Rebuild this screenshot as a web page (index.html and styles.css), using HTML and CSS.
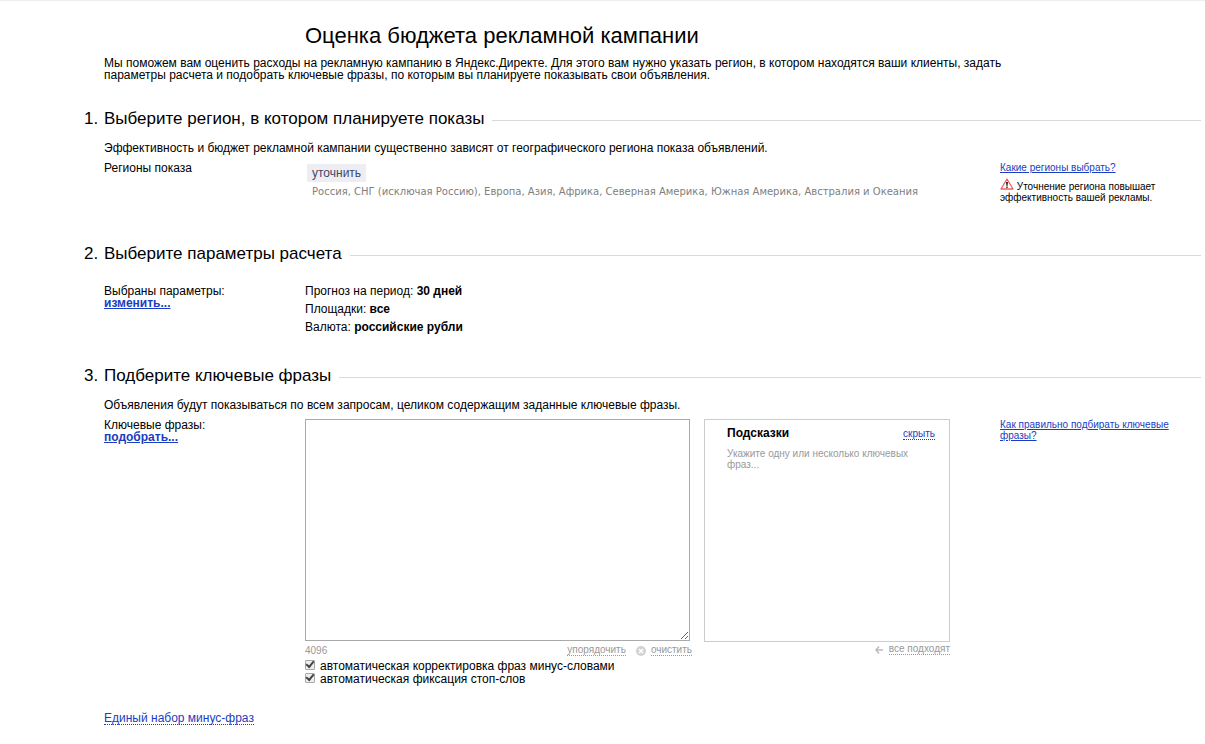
FILE: index.html
```html
<!DOCTYPE html>
<html lang="ru">
<head>
<meta charset="utf-8">
<meta name="viewport" content="width=device-width, initial-scale=1">
<title>Оценка бюджета рекламной кампании</title>
<link rel="stylesheet" href="styles.css">
</head>
<body>
<main class="page">
  <header class="intro">
    <h1 class="title">Оценка бюджета рекламной кампании</h1>
    <p class="lead">Мы поможем вам оценить расходы на рекламную кампанию в Яндекс.Директе. Для этого вам нужно указать регион, в котором находятся ваши клиенты, задать параметры расчета и подобрать ключевые фразы, по которым вы планируете показывать свои объявления.</p>
  </header>

  <section class="step step-region">
    <h2 class="step-title"><span class="num">1.</span><span>Выберите регион, в котором планируете показы</span></h2>
    <p class="note">Эффективность и бюджет рекламной кампании существенно зависят от географического региона показа объявлений.</p>
    <div class="row">
      <div>Регионы показа</div>
      <div class="regions">
        <button type="button" class="refine">уточнить</button>
        <p class="region-list">Россия, СНГ (исключая Россию), Европа, Азия, Африка, Северная Америка, Южная Америка, Австралия и Океания</p>
      </div>
      <aside class="help">
        <a href="#">Какие регионы выбрать?</a>
        <p class="warning"><svg class="warn-icon" viewBox="0 0 14 12" aria-hidden="true"><path d="M7 1 13 11H1Z" fill="#fff" stroke="#f0605c" stroke-width="1.3" stroke-linejoin="round"/><path d="M6 4h2L7.500 8h-1ZM6.300 8.600h1.400v1.400H6.300Z" fill="#222"/></svg> Уточнение региона повышает эффективность вашей рекламы.</p>
      </aside>
    </div>
  </section>

  <section class="step step-params">
    <h2 class="step-title"><span class="num">2.</span><span>Выберите параметры расчета</span></h2>
    <div class="row">
      <div>Выбраны параметры:<br><a class="strong-link" href="#">изменить...</a></div>
      <ul class="params">
        <li>Прогноз на период: <b>30 дней</b></li>
        <li>Площадки: <b>все</b></li>
        <li>Валюта: <b>российские рубли</b></li>
      </ul>
    </div>
  </section>

  <section class="step step-phrases">
    <h2 class="step-title"><span class="num">3.</span><span>Подберите ключевые фразы</span></h2>
    <p class="note">Объявления будут показываться по всем запросам, целиком содержащим заданные ключевые фразы.</p>
    <div class="row">
      <div><label for="phrases">Ключевые фразы:</label><br><a class="strong-link" href="#">подобрать...</a></div>
      <div class="editor">
        <div class="phrases">
          <textarea id="phrases" class="phrase-box"></textarea>
          <div class="tools">
            <span class="count">4096</span>
            <button type="button" class="pseudo">упорядочить</button>
            <svg class="clear-icon" viewBox="0 0 10 10" aria-hidden="true"><circle cx="5" cy="5" r="5" fill="#d2d2d2"/><path d="M3 3 7 7M7 3 3 7" stroke="#fff" stroke-width="1.6"/></svg>
            <button type="button" class="pseudo">очистить</button>
          </div>
          <label class="check"><input type="checkbox" checked><span>автоматическая корректировка фраз минус-словами</span></label>
          <label class="check"><input type="checkbox" checked><span>автоматическая фиксация стоп-слов</span></label>
        </div>
        <div class="hints">
          <div class="hint-box">
            <div class="hint-head"><h3>Подсказки</h3><button type="button" class="pseudo hide">скрыть</button></div>
            <p class="hint-text">Укажите одну или несколько ключевых фраз...</p>
          </div>
          <div class="hint-tools">
            <svg class="arrow-icon" viewBox="0 0 8 8" aria-hidden="true"><path d="M4 .5.900 4 4 7.500M1 4h7" fill="none" stroke="#bbb" stroke-width="1.5"/></svg>
            <button type="button" class="pseudo">все подходят</button>
          </div>
        </div>
      </div>
      <aside class="help"><a href="#">Как правильно подбирать ключевые фразы?</a></aside>
    </div>
    <button type="button" class="pseudo minus">Единый набор минус-фраз</button>
  </section>
</main>
</body>
</html>
```
FILE: styles.css
```css
* { box-sizing: border-box; }
body {
  margin: 0;
  border-top: 1px solid #eee;
  background: #fff;
  color: #000;
  font: 12px/12px "Liberation Sans", Arial, sans-serif;
}
h1, h2, h3, p, ul { margin: 0; padding: 0; font-weight: normal; }
a { color: #1a3dc1; text-decoration: underline; }
button {
  padding: 0;
  border: 0;
  background: none;
  color: inherit;
  font: inherit;
  cursor: pointer;
}
.page { padding: 20px 4px 16px 104px; }
.title { padding-left: 201px; font-size: 22px; line-height: 30px; }
.lead { max-width: 920px; margin-top: 6px; }

.step-title {
  display: flex;
  align-items: center;
  margin-left: -20px;
  font-size: 17px;
  line-height: 20px;
}
.step-title .num { width: 20px; flex: none; }
.step-title::after {
  content: "";
  flex: 1;
  height: 1px;
  margin: 2px 0 0 8px;
  background: #d9d9d9;
}
.step-region { margin-top: 28px; }
.step-params { margin-top: 41px; }
.step-phrases { margin-top: 27px; }
.note { margin-top: 13px; }
.row {
  display: grid;
  grid-template-columns: 201px minmax(0, 1fr) 201px;
  margin-top: 8px;
}
.step-params .row { margin-top: 21px; }

.regions { padding-left: 2px; }
.refine {
  display: block;
  height: 18px;
  margin-top: 2px;
  padding: 0 5px;
  border-radius: 1px;
  background: #eeeef2;
  color: #3f4668;
}
.region-list {
  padding: 4px 0 0 5px;
  color: #808080;
  font: 10px/12px "DejaVu Sans", Verdana, sans-serif;
}
.help { font-size: 10px; line-height: 11px; }
.warning { max-width: 170px; margin-top: 5px; }
.warn-icon { width: 14px; height: 12px; }
.strong-link { font-weight: bold; }
.params { list-style: none; }
.params li { margin-bottom: 6px; }

.editor {
  display: grid;
  grid-template-columns: minmax(0, 385fr) minmax(0, 246fr);
  gap: 14px;
  margin-right: 50px;
}
.phrase-box {
  display: block;
  width: 100%;
  height: 222px;
  border: 1px solid #a9a9a9;
  background: #fff;
  resize: vertical;
}
.tools, .hint-tools {
  display: flex;
  align-items: center;
  color: #999;
  font-size: 10px;
  line-height: 10px;
}
.tools { margin: 4px -2px 3px 0; }
.count { flex: 1; }
.pseudo { border-bottom: 1px dotted currentColor; }
.clear-icon { width: 10px; height: 10px; margin: 0 5px 0 10px; }
.check { display: flex; align-items: center; height: 13px; }
.check input {
  appearance: none;
  width: 10px;
  height: 10px;
  margin: 0 5px 2px 0;
  border: 1px solid #aaa;
  border-radius: 1px;
  background: #eee;
  display: grid;
  place-items: center;
}
.check input:checked::before {
  content: "";
  width: 6px;
  height: 3px;
  margin-bottom: 2px;
  border: solid #444;
  border-width: 0 0 2px 2px;
  transform: rotate(-50deg);
}
.hint-box {
  height: 223px;
  padding: 7px 14px 8px 22px;
  border: 1px solid #ccc;
}
.hint-head { display: flex; justify-content: space-between; align-items: baseline; }
.hint-head h3 { font-size: 12px; font-weight: bold; }
.hide { color: #1a3dc1; font-size: 10px; line-height: 10px; }
.hint-text { margin-top: 8px; color: #999; font-size: 10px; line-height: 11px; }
.hint-tools { justify-content: flex-end; margin-top: 2px; }
.arrow-icon { width: 8px; height: 8px; margin-right: 6px; }
.minus { margin-top: 27px; color: #1a3dc1; }
```
